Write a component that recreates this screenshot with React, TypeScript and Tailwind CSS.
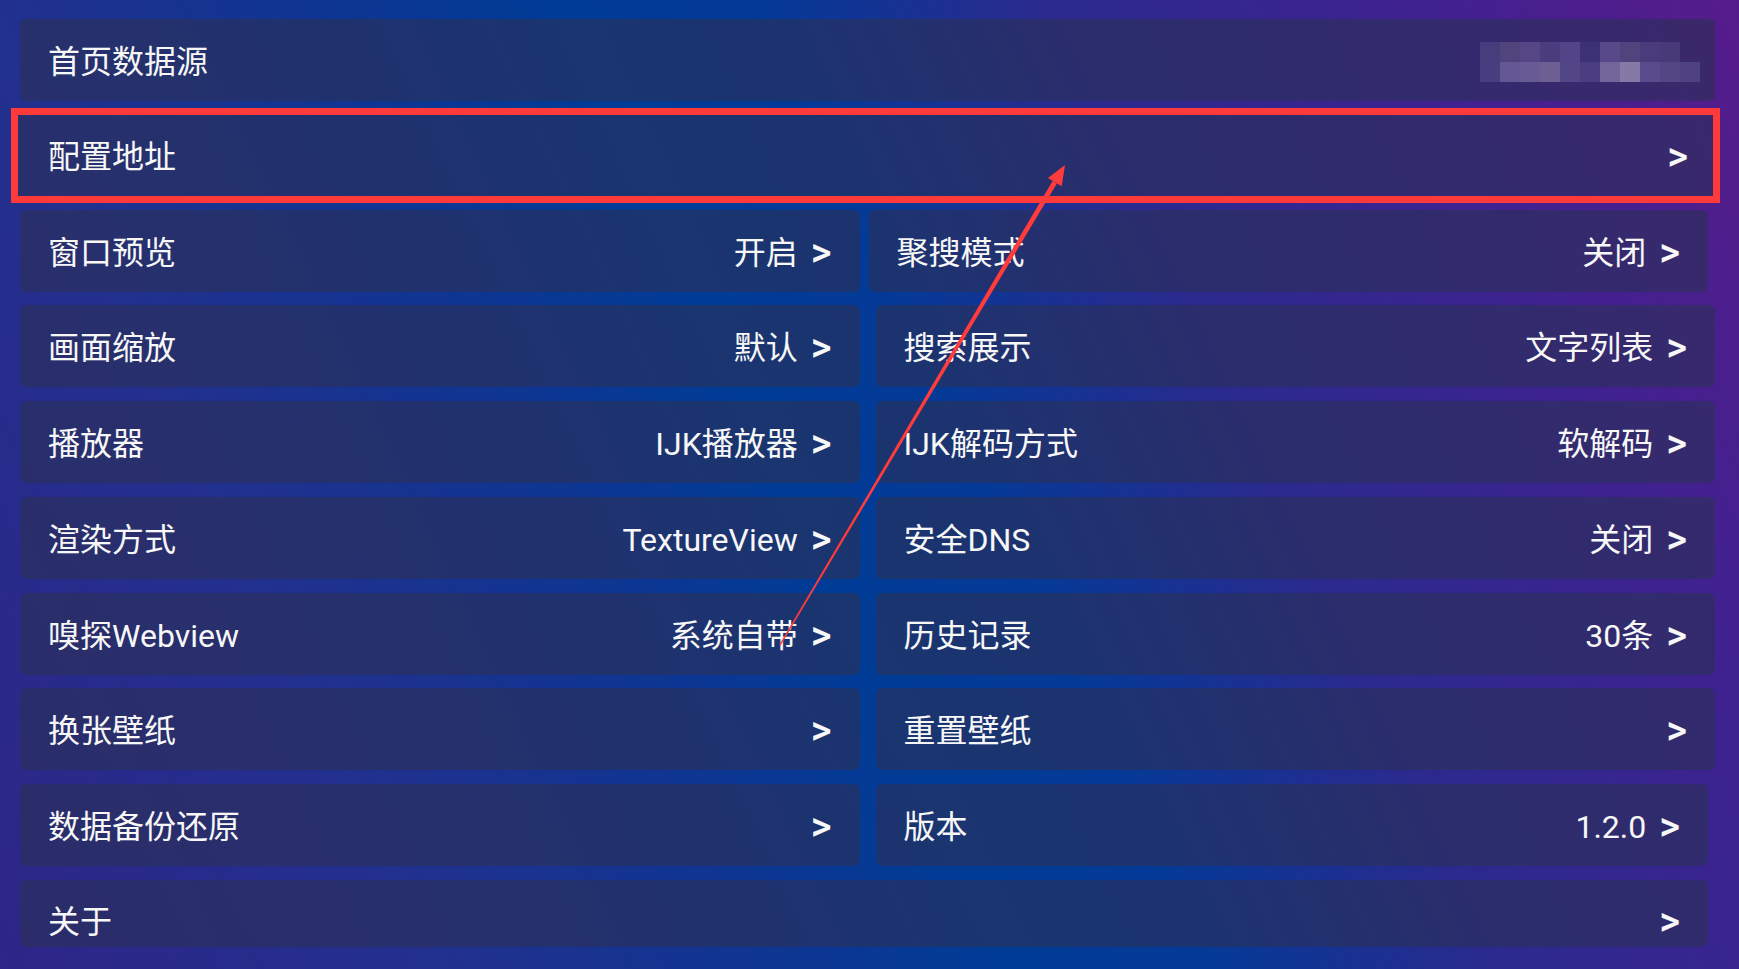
import React from "react";

const GRID_ROWS: [string, string, string, string][] = [
  ["窗口预览", "开启", "聚搜模式", "关闭"],
  ["画面缩放", "默认", "搜索展示", "文字列表"],
  ["播放器", "IJK播放器", "IJK解码方式", "软解码"],
  ["渲染方式", "TextureView", "安全DNS", "关闭"],
  ["嗅探Webview", "系统自带", "历史记录", "30条"],
  ["换张壁纸", "", "重置壁纸", ""],
  ["数据备份还原", "", "版本", "1.2.0"],
];

// mosaic blocks that hide the data source value
const MOSAIC_TOP = ["#4a3f7e", "#54487f", "#5a4a88", "#4d4080", "#54488a", "#3e3276", "#5c4e8e", "#544680", "#4b3e7e", "#4a3d7a", "transparent"];
const MOSAIC_BOTTOM = ["#4b4080", "#6a5c98", "#6e609a", "#736599", "#574a8a", "#4d4084", "#7a6ca0", "#8e82ae", "#5e5090", "#574a88", "#524585"];

function Chevron({ className = "ml-[13px]" }: { className?: string }) {
  return <span className={`text-[40px] font-medium leading-none ${className}`}>&gt;</span>;
}

function Row({ label, value, chevron = true, className = "h-[82px] pt-[4px]" }: { label: string; value?: string; chevron?: boolean; className?: string }) {
  return (
    <div className={`flex items-center justify-between rounded-md bg-[rgba(43,48,87,0.6)] px-[28px] ${className}`}>
      <span>{label}</span>
      <span className="flex items-center">
        {value && <span>{value}</span>}
        {chevron && <Chevron />}
      </span>
    </div>
  );
}

function Mosaic() {
  return (
    <div className="mr-[-13px] flex flex-col opacity-90">
      {[MOSAIC_TOP, MOSAIC_BOTTOM].map((row, r) => (
        <div key={r} className="flex">
          {row.map((c, i) => (
            <div key={i} className="h-[20px] w-[20px]" style={{ backgroundColor: c }} />
          ))}
        </div>
      ))}
    </div>
  );
}

export default function App() {
  return (
    <div className="relative h-[969px] w-full overflow-hidden bg-[linear-gradient(65deg,#2e2688_0%,#22308e_20%,#0f3592_35%,#003c96_46%,#043a97_55%,#2a2a8e_68%,#3f2290_85%,#561b8a_100%)] font-['Roboto','Noto_Sans_CJK_SC',sans-serif] text-[32px] text-[#f7f7f7]">
      <div className="flex flex-col gap-[13.75px] pb-[21px] pl-[20px] pr-[24px] pt-[19px]">
        <div className="flex h-[82px] items-center justify-between rounded-md bg-[rgba(43,48,87,0.6)] pl-[28px] pr-[28px] pt-[4px]">
          <span>首页数据源</span>
          <Mosaic />
        </div>

        {/* highlighted row */}
        <div className="-my-[7px] ml-[-9px] mr-[-5px] border-[7px] border-[#ff3a3a]">
          <div className="flex h-[81px] items-center justify-between bg-[rgba(43,48,87,0.6)] pl-[30px] pr-[25px] pt-[4px]">
            <span>配置地址</span>
            <Chevron className="" />
          </div>
        </div>

        <div className="grid grid-cols-2 gap-x-[16px] gap-y-[13.75px]">
          {GRID_ROWS.map(([l, lv, r, rv], i) => (
            <React.Fragment key={i}>
              <Row label={l} value={lv} />
              <Row
                label={r}
                value={rv}
                className={i === 0 ? "h-[82px] pt-[4px] -ml-[7px] mr-[7px]" : i === 6 ? "h-[82px] pt-[4px] mr-[7px]" : "h-[82px] pt-[4px]"}
              />
            </React.Fragment>
          ))}
        </div>

        <Row label="关于" className="mr-[7px] h-[67px] pt-[17px]" />
      </div>

      {/* annotation arrow */}
      <svg className="pointer-events-none absolute left-0 top-0" width="1739" height="969" viewBox="0 0 1739 969">
        <polygon points="780.6,645.4 779.4,644.6 1052.6,180.9 1056.9,183.5" fill="#ff3b3b" />
        <polygon points="1065,165 1047.9,178.1 1061.7,186.3" fill="#ff3b3b" />
      </svg>
    </div>
  );
}
